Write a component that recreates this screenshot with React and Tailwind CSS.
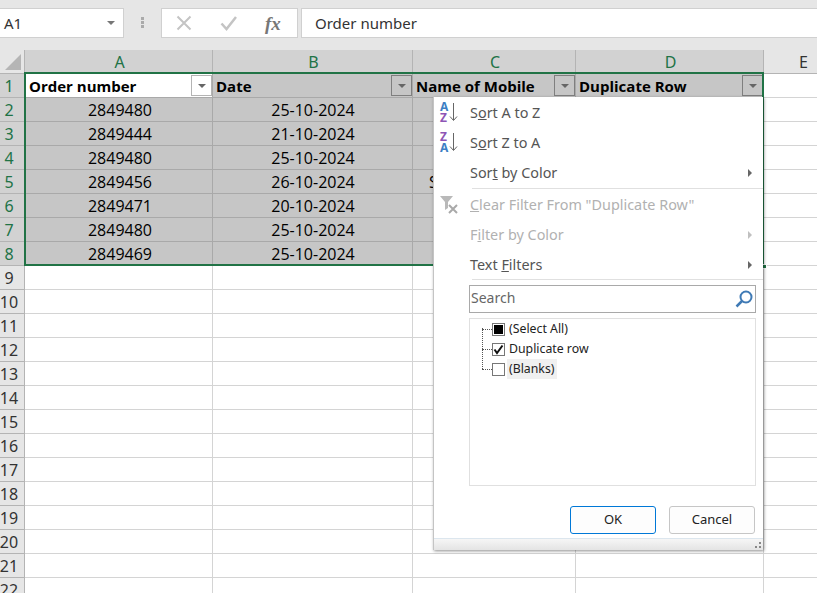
import React from "react";

const COLS = ["A", "B", "C", "D", "E"];
const ROWS = [
  ["2849480", "25-10-2024", ""],
  ["2849444", "21-10-2024", ""],
  ["2849480", "25-10-2024", ""],
  ["2849456", "26-10-2024", "S"],
  ["2849471", "20-10-2024", ""],
  ["2849480", "25-10-2024", ""],
  ["2849469", "25-10-2024", ""],
];
const UI = "font-['Noto_Sans','Open_Sans',sans-serif]";
const CELL = "font-['Open_Sans','Noto_Sans',sans-serif]";
const GRID = "grid grid-cols-[25px_188px_200px_163px_188px_1fr] grid-rows-[24px]";

function Caret({ className = "border-t-[#666]" }) {
  return <span className={`w-0 h-0 border-x-[4px] border-x-transparent border-t-[4px] ${className}`}></span>;
}

function FilterButton({ active }) {
  return (
    <span className={`absolute right-0 top-[1px] w-[21px] h-[21px] flex items-center justify-center border ${active ? "bg-white border-[#b4b4b4]" : "border-[#7f7f7f] bg-[#c6c6c6]"}`}>
      <Caret />
    </span>
  );
}

function FormulaBar() {
  return (
    <div className="h-[50px] bg-[#e6e6e6] flex pt-2 shrink-0">
      <div className="w-[124px] h-[30px] bg-white border border-[#d0d0d0] border-l-0 flex items-center justify-between pl-1 pr-[8px] text-[15px] text-[#333]">
        <span className={UI}>A1</span>
        <Caret className="border-t-[#777]" />
      </div>
      <div className="w-[37px] h-[28px] flex flex-col items-center justify-center gap-[1px]">
        <span className="w-[3px] h-[3px] bg-[#aaa]"></span>
        <span className="w-[3px] h-[3px] bg-[#aaa]"></span>
        <span className="w-[3px] h-[3px] bg-[#aaa]"></span>
      </div>
      <div className="w-[137px] h-[30px] bg-white border border-[#d0d0d0] flex items-center">
        <svg className="ml-[14px]" width="16" height="16" viewBox="0 0 16 16" fill="none" stroke="#c4c4c4" strokeWidth="2">
          <path d="M1.5 1.5 14.5 14.5M14.5 1.5 1.5 14.5" />
        </svg>
        <svg className="ml-[28px]" width="18" height="16" viewBox="0 0 18 16" fill="none" stroke="#c4c4c4" strokeWidth="2.5">
          <path d="M1.5 8.5 6.5 14 16 2" />
        </svg>
        <span className="ml-[27px] font-['Liberation_Serif',serif] italic font-bold text-[19px] leading-none text-[#777]">fx</span>
      </div>
      <div className="ml-[3px] flex-1 h-[30px] bg-white border border-[#d0d0d0] border-r-0 flex items-center pl-[13px]">
        <span className={`${UI} text-[15px] text-[#333]`}>Order number</span>
      </div>
    </div>
  );
}

function HeaderCell({ label, active }) {
  return (
    <div className={`relative flex items-center pt-[1px] border-r border-b border-[#a9a9a9] text-[15px] leading-none font-bold text-black whitespace-nowrap ${active ? "bg-white pl-[4px]" : "bg-[#c6c6c6] pl-[3px]"}`}>
      {label}
      <FilterButton active={active} />
    </div>
  );
}

function Sheet() {
  const rowNumbers = Array.from({ length: 22 }, (_, i) => i + 1);
  return (
    <div className={`${CELL} relative`}>
      <div className={`${GRID} h-[24px]`}>
        <div className="bg-[#e6e6e6] border-r border-b border-[#b4b4b4] relative overflow-hidden">
          <span className="absolute right-[3px] bottom-[3px] w-0 h-0 border-l-[16px] border-l-transparent border-b-[16px] border-b-[#b5b5b5]"></span>
        </div>
        {COLS.map((c) => (
          <div
            key={c}
            className={`${UI} flex items-center justify-center text-[16px] leading-none border-b border-[#b4b4b4] ${c === "E" ? "bg-[#e6e6e6] text-[#333] pl-[26px]" : "bg-[#d2d2d2] text-[#217346] border-r pl-[2px]"}`}
          >
            {c}
          </div>
        ))}
      </div>
      {rowNumbers.map((n) => {
        const selected = n <= 8;
        const data = n >= 2 && n <= 8 ? ROWS[n - 2] : null;
        const fill = selected ? "bg-[#c6c6c6] border-[#a9a9a9]" : "bg-white border-[#d4d4d4]";
        return (
          <div key={n} className={`${GRID} h-[24px]`}>
            <div className={`${UI} flex items-center justify-center pr-[6px] text-[16px] leading-none border-r border-b border-[#b4b4b4] ${selected ? "bg-[#d2d2d2] text-[#217346]" : "bg-[#e6e6e6] text-[#333]"}`}>
              {n}
            </div>
            {n === 1 ? (
              <>
                <HeaderCell label="Order number" active />
                <HeaderCell label="Date" />
                <HeaderCell label="Name of Mobile" />
                <HeaderCell label="Duplicate Row" />
              </>
            ) : (
              [0, 1, 2, 3].map((i) => (
                <div key={i} className={`border-r border-b ${fill} flex items-center text-[16px] leading-none text-black whitespace-nowrap overflow-hidden ${i === 2 ? "justify-start pl-[16px]" : i === 0 ? "justify-center pl-[3px]" : "justify-center pl-[1px]"}`}>
                  {data && i < 3 ? data[i] : ""}
                </div>
              ))
            )}
            <div className="bg-white border-b border-[#d4d4d4]"></div>
          </div>
        );
      })}
      {/* selection outline */}
      <div className="absolute left-[24px] top-[22px] w-[740px] h-[194px] border-2 border-[#217346] pointer-events-none"></div>
      <div className="absolute left-[762px] top-[214px] w-[5px] h-[5px] bg-[#217346] border border-white pointer-events-none"></div>
    </div>
  );
}

function SortIcon({ top, bottom }) {
  const tone = (l) => (l === "A" ? "text-[#3d7fc4]" : "text-[#8e55b5]");
  return (
    <span className="relative w-[20px] h-[22px] block">
      <span className={`absolute left-[1px] top-0 font-bold text-[12px] leading-[10px] ${tone(top)}`}>{top}</span>
      <span className={`absolute left-[1px] top-[11px] font-bold text-[12px] leading-[10px] ${tone(bottom)}`}>{bottom}</span>
      <svg className="absolute left-[10px] top-0" width="9" height="20" viewBox="0 0 9 20" fill="none" stroke="#666" strokeWidth="1">
        <path d="M4.5 1v17M1 14.5l3.5 4 3.5-4" />
      </svg>
    </span>
  );
}

function MenuItem({ icon, children, arrow, disabled, lower }) {
  return (
    <div className={`h-[30px] flex items-center ${lower ? "pt-[1px]" : "pb-[1px]"} ${disabled ? "text-[#b1b1b1]" : "text-[#555]"}`}>
      <span className="w-[36px] pl-[5px] flex items-center">{icon}</span>
      <span className="text-[14.4px] whitespace-nowrap">{children}</span>
      {arrow && (
        <span className={`ml-auto mr-[11px] w-0 h-0 border-y-[4px] border-y-transparent border-l-[4px] ${disabled ? "border-l-[#c0c0c0]" : "border-l-[#666]"}`}></span>
      )}
    </div>
  );
}

function TreeRow({ label, children, highlight }) {
  return (
    <div className="h-[20px] flex items-center relative">
      <span className="w-[10px] border-t border-dotted border-[#555] ml-[12px]"></span>
      <span className="w-[13px] h-[13px] border border-[#777] bg-white flex items-center justify-center shrink-0">{children}</span>
      <span className={`ml-[2px] px-[2px] h-[20px] flex items-center text-[12.3px] text-[#222] ${highlight ? "bg-[#f0f0f0]" : ""}`}>{label}</span>
    </div>
  );
}

function FilterMenu() {
  return (
    <div className={`${UI} absolute left-[433px] top-[97px] w-[330px] h-[453px] bg-white flex flex-col border-l border-[#c4c4c4] shadow-[1px_1px_3px_rgba(0,0,0,0.45)]`}>
      <div className="pt-[1px]">
        <MenuItem icon={<SortIcon top="A" bottom="Z" />}>S<span className="underline">o</span>rt A to Z</MenuItem>
        <MenuItem icon={<SortIcon top="Z" bottom="A" />}>S<span className="underline">o</span>rt Z to A</MenuItem>
        <MenuItem arrow>Sor<span className="underline">t</span> by Color</MenuItem>
      </div>
      <div className="ml-[38px] border-t border-[#e0e0e0]"></div>
      <MenuItem
        disabled
        lower
        icon={
          <svg width="20" height="20" viewBox="0 0 20 20" fill="none">
            <path d="M1 1h13L9 7v6l-3 2V7z" fill="#b9b9b9" />
            <path d="M10 10l8 8M18 10l-8 8" stroke="#a9a9a9" strokeWidth="2" />
          </svg>
        }
      >
        <span className="underline">C</span>lear Filter From "Duplicate Row"
      </MenuItem>
      <MenuItem disabled arrow lower>F<span className="underline">i</span>lter by Color</MenuItem>
      <MenuItem arrow lower>Text <span className="underline">F</span>ilters</MenuItem>
      <div className="ml-[38px] border-t border-[#e0e0e0]"></div>

      <div className="ml-[35px] mr-[7px] mt-[5px] h-[28px] border border-[#a9a9a9] flex items-center justify-between pl-[1px] pr-[1px] pb-[3px]">
        <span className="text-[14px] text-[#666]">Search</span>
        <svg className="mt-[3px]" width="20" height="20" viewBox="0 0 20 20" fill="none" stroke="#3f7ab5" strokeWidth="2">
          <circle cx="12" cy="8" r="5.5" />
          <path d="M8 12 2.5 17.5" strokeWidth="2.5" />
        </svg>
      </div>

      <div className="ml-[35px] mr-[7px] mt-[5px] h-[168px] border border-[#e0e0e0]">
        <div className="relative">
          <span className="absolute left-[12px] top-[9px] h-[41px] border-l border-dotted border-[#555]"></span>
          <TreeRow label="(Select All)"><span className="w-[9px] h-[9px] bg-black"></span></TreeRow>
          <TreeRow label="Duplicate row">
            <svg width="11" height="11" viewBox="0 0 11 11" fill="none" stroke="#111" strokeWidth="2"><path d="M1.5 5.5 4 9l5.5-7.5" /></svg>
          </TreeRow>
          <TreeRow label="(Blanks)" highlight />
        </div>
      </div>

      <div className="flex justify-end gap-[13px] mr-[8px] mt-[20px] text-[13px] text-[#222]">
        <button className="w-[86px] h-[28px] rounded-[3px] border border-[#0078d7] bg-[#fdfdfd]">OK</button>
        <button className="w-[86px] h-[28px] rounded-[3px] border border-[#c6c6c6] bg-[#fdfdfd]">Cancel</button>
      </div>

      <div className="mt-auto h-[12px] border-t border-[#dce6ee] bg-gradient-to-b from-[#f6f6f6] to-[#e4e4e4] relative">
        <span className="absolute right-[2px] bottom-[2px] w-[2px] h-[2px] bg-[#888]"></span>
        <span className="absolute right-[2px] bottom-[6px] w-[2px] h-[2px] bg-[#888]"></span>
        <span className="absolute right-[6px] bottom-[2px] w-[2px] h-[2px] bg-[#888]"></span>
      </div>
    </div>
  );
}

export default function App() {
  return (
    <div className="w-[817px] h-[593px] overflow-hidden relative bg-white">
      <FormulaBar />
      <Sheet />
      <FilterMenu />
    </div>
  );
}
